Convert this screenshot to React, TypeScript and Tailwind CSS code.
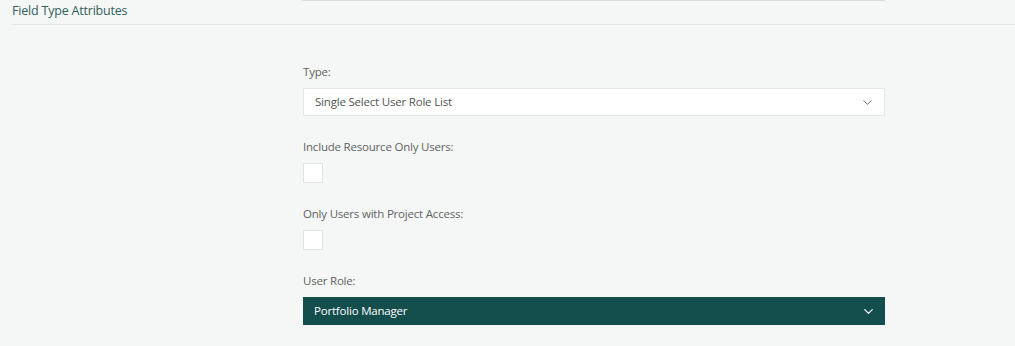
import React from 'react';
import { ChevronDown } from 'lucide-react';

const Field: React.FC<{ label: string; children: React.ReactNode }> = ({ label, children }) => (
  <div>
    <div className="text-[11.5px] leading-[16px] tracking-[-0.2px] text-[#5f6362]">{label}</div>
    <div className="mt-[8px]">{children}</div>
  </div>
);

export default function App() {
  return (
    <div
      className="h-[346px] w-[1015px] overflow-hidden bg-[#f5f7f6]"
      style={{ fontFamily: '"Open Sans", "Noto Sans", sans-serif' }}
    >
      <div className="ml-[302px] h-px w-[583px] bg-[#d9dddc]" />
      <div className="ml-3 h-[24px] border-b border-[#e1e4e3] pt-[1px] text-[12.5px] leading-[18px] tracking-[-0.2px] text-[#2f615d]">
        Field Type Attributes
      </div>

      <div className="ml-[303px] w-[582px] pt-[39px] flex flex-col gap-[23px]">
        <Field label="Type:">
          <div className="flex h-[28px] items-center justify-between border border-[#e4e7e6] bg-white pl-[11px] pr-[9px] text-[11.5px] tracking-[-0.2px] text-[#505453]">
            <span>Single Select User Role List</span>
            <ChevronDown className="h-[15px] w-[15px] text-[#5c6b70]" strokeWidth={1.5} />
          </div>
        </Field>
        <Field label="Include Resource Only Users:">
          <div className="h-[20px] w-[20px] border border-[#e1e4e3] bg-white" />
        </Field>
        <Field label="Only Users with Project Access:">
          <div className="h-[20px] w-[20px] border border-[#e1e4e3] bg-white" />
        </Field>
        <Field label="User Role:">
          <div className="flex h-[28px] items-center justify-between bg-[#134d4c] pl-[11px] pr-[9px] text-[11.5px] tracking-[-0.2px] text-white">
            <span>Portfolio Manager</span>
            <ChevronDown className="h-[15px] w-[15px] text-white" strokeWidth={2} />
          </div>
        </Field>
      </div>
    </div>
  );
}
